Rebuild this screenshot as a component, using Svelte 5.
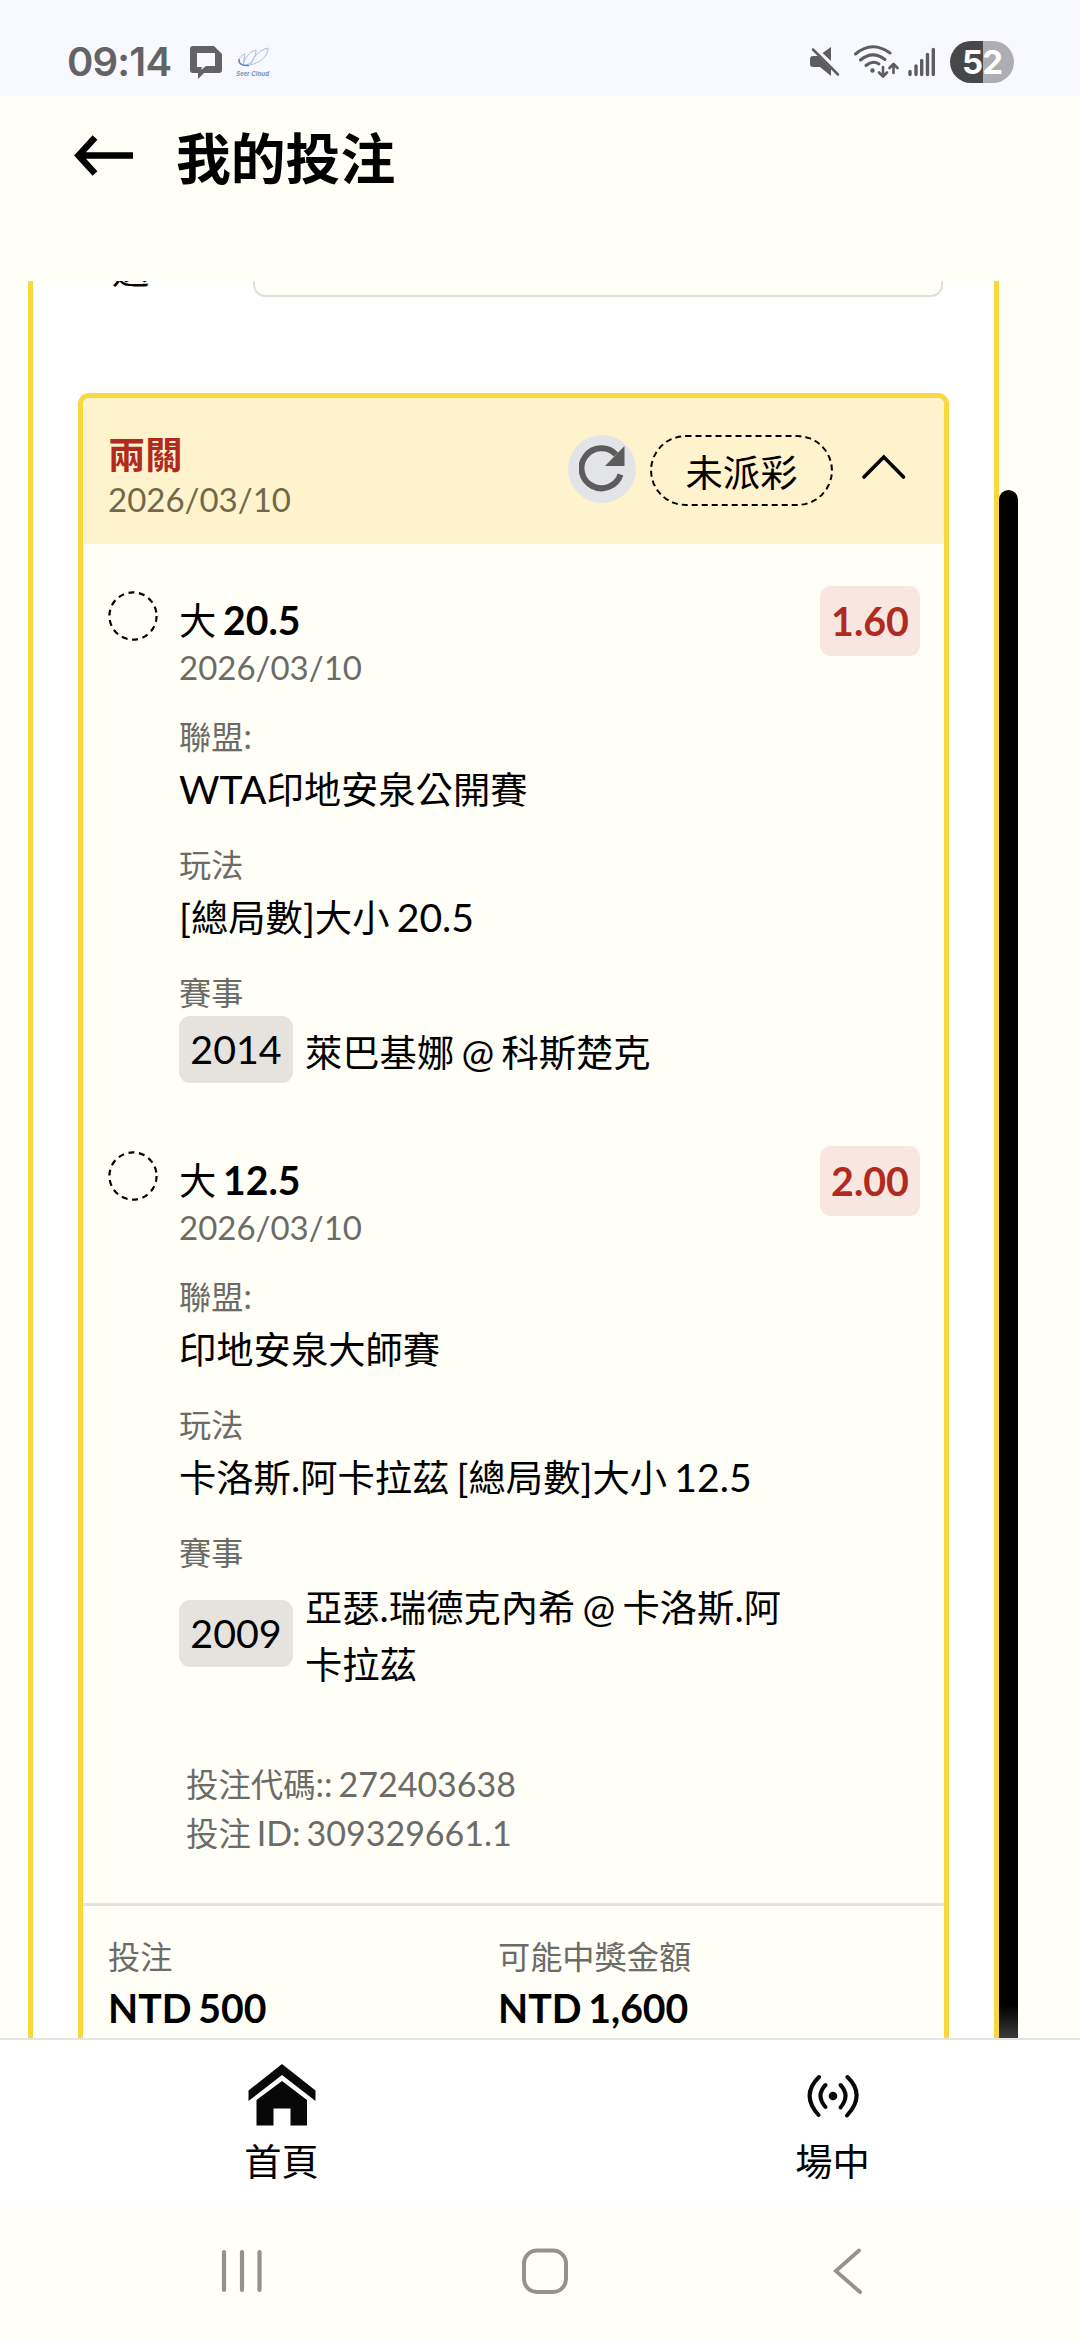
<script lang="ts">
	const legs = [
		{
			side: '大',
			line: '20.5',
			date: '2026/03/10',
			odds: '1.60',
			league: 'WTA印地安泉公開賽',
			market: '[總局數]大小 20.5',
			code: '2014',
			match: '萊巴基娜 @ 科斯楚克'
		},
		{
			side: '大',
			line: '12.5',
			date: '2026/03/10',
			odds: '2.00',
			league: '印地安泉大師賽',
			market: '卡洛斯.阿卡拉茲 [總局數]大小 12.5',
			code: '2009',
			match: '亞瑟.瑞德克內希 @ 卡洛斯.阿卡拉茲'
		}
	];

	const totals = [
		{ label: '投注', amount: 'NTD 500' },
		{ label: '可能中獎金額', amount: 'NTD 1,600' }
	];

	// split mixed text so latin runs can be set slightly larger than the CJK ones
	function runs(text: string) {
		return text.match(/[\x20-\x7e]+|[^\x20-\x7e]+/g) ?? [];
	}
</script>

{#snippet mixed(text: string)}
	{#each runs(text) as run}{#if /^[\x20-\x7e]/.test(run)}<span class="latin">{run}</span>{:else}{run}{/if}{/each}
{/snippet}

<div class="screen">
	<div class="status-bar">
		<span class="clock">09:14</span>
		<svg class="chat-icon" width="32" height="33" viewBox="0 0 32 33">
			<path fill="#636366" fill-rule="evenodd" d="M3 0H24L32 8V24Q32 27 29 27H14L8 33V27H3Q0 27 0 24V3Q0 0 3 0ZM7 7V21H12L11 24L16 20H25V7Z" />
		</svg>
		<svg class="cloud-icon" width="34" height="32" viewBox="0 0 34 32">
			<g fill="none" stroke="#a9bddd" stroke-width="1">
				<path d="M5 18C1 14 4 10 9 8C8 12 8 16 7 19" />
				<path d="M7 19C9 12 13 6 20 4C20 10 17 17 10 19" />
				<path d="M15 18C18 10 23 4 32 2C32 9 26 17 13 19" />
			</g>
			<path fill="none" stroke="#5f86c4" stroke-width="1.400" d="M3 13Q2 20 13 19.500" />
			<text x="0" y="29.500" textLength="33" lengthAdjust="spacingAndGlyphs">Seer Cloud</text>
		</svg>
		<div class="status-right">
			<svg width="30" height="30" viewBox="0 0 30 30">
				<path fill="#5d5d60" d="M21 0V14L12.500 6ZM3 9H8L21 22V29L10 20H3Q0 20 0 17V12Q0 9 3 9Z" />
				<path stroke="#5d5d60" stroke-width="2.500" stroke-linecap="round" d="M3 2.500L28 27.500" />
			</svg>
			<svg class="wifi" width="45" height="34" viewBox="0 0 45 34">
				<g fill="none" stroke="#5d5d60" stroke-width="3" stroke-linecap="round" stroke-linejoin="round">
					<path d="M1.500 9Q18 -5 36 8" />
					<path d="M6.500 15Q18.500 5 31 14.500" />
					<path d="M12 20.500Q18.500 15 25 19" />
					<path d="M29 22V31M25 27.500L29 31.500L33 27.500" stroke-width="2.600" />
					<path d="M39.500 28V19.500M35.500 23L39.500 19L43.500 23" stroke-width="2.600" />
				</g>
				<circle cx="18.500" cy="25.500" r="2.200" fill="#5d5d60" />
			</svg>
			<svg class="signal" width="28" height="30" viewBox="0 0 28 30">
				<path stroke="#5d5d60" stroke-width="3.400" stroke-linecap="round" d="M2 24.500V27.500M8 19V27.500M13.700 13.500V27.500M19.500 7.500V27.500M25.300 2.500V27.500" />
			</svg>
			<div class="battery">52</div>
		</div>
	</div>

	<header>
		<svg width="60" height="42" viewBox="0 0 60 42">
			<path fill="none" stroke="#000" stroke-width="6.500" d="M59 20.500H5M21 2.500L4.500 20.500L21 38.500" />
		</svg>
		<h1>我的投注</h1>
	</header>

	<main>
		<div class="panel">
			<div class="filter">
				<span class="filter-label">選</span>
				<div class="filter-input"></div>
			</div>

			<section class="bet">
				<div class="bet-head">
					<div class="bet-name">
						<b>兩關</b>
						<span class="date">2026/03/10</span>
					</div>
					<div class="refresh">
						<svg width="46" height="48" viewBox="0 0 46 48">
							<path fill="none" stroke="#5c5c5c" stroke-width="6" d="M41.500 29.500A20 20 0 1 1 37 9.500" />
							<path fill="#5c5c5c" d="M45.500 1V21H26Z" />
						</svg>
					</div>
					<span class="pill">未派彩</span>
					<svg class="chevron" width="46" height="28" viewBox="0 0 46 28">
						<path fill="none" stroke="#000" stroke-width="3.600" stroke-linecap="round" d="M3 24L22.800 4L42.500 24" />
					</svg>
				</div>

				<div class="bet-body">
					{#each legs as leg}
						<div class="leg">
							<svg class="pending" width="50" height="50" viewBox="0 0 50 50">
								<circle cx="25" cy="25" r="23.600" fill="none" stroke="#000" stroke-width="2.200" stroke-dasharray="6 4.590" />
							</svg>
							<div class="leg-info">
								<div class="leg-title">{leg.side} <b class="latin">{leg.line}</b></div>
								<div class="date">{leg.date}</div>
								<div class="label first">{@render mixed('聯盟:')}</div>
								<div class="value">{@render mixed(leg.league)}</div>
								<div class="label">玩法</div>
								<div class="value">{@render mixed(leg.market)}</div>
								<div class="label">賽事</div>
								<div class="match">
									<span class="chip">{leg.code}</span>
									<span class="teams">{@render mixed(leg.match)}</span>
								</div>
							</div>
							<span class="odds">{leg.odds}</span>
						</div>
					{/each}

					<div class="codes">
						<div>{@render mixed('投注代碼:: 272403638')}</div>
						<div>{@render mixed('投注 ID: 309329661.1')}</div>
					</div>
				</div>

				<div class="totals">
					{#each totals as total}
						<div>
							<div class="total-label">{total.label}</div>
							<div class="amount">{total.amount}</div>
						</div>
					{/each}
				</div>
			</section>
		</div>
		<div class="scrollbar"></div>
	</main>

	<nav>
		<div class="tab">
			<svg width="68" height="64" viewBox="0 0 68 64">
				<path fill="#080808" d="M34 0L67.500 26.500V37L34 11L0.500 37V26.500Z" />
				<path fill="#080808" d="M34 17L59 36V61.500H42.500V44.500H25.500V61.500H8.500V36Z" />
			</svg>
			<span>首頁</span>
		</div>
		<div class="tab">
			<svg width="68" height="64" viewBox="0 0 68 64">
				<g fill="none" stroke="#080808" stroke-width="4" stroke-linecap="round">
					<path d="M20 13Q1.500 31 19.500 51M48.500 13Q67 31 48 51.500" />
					<path d="M26.500 21Q16.500 31.500 26.500 43M41.500 21Q51.500 31.500 41.500 43.500" />
				</g>
				<circle cx="34" cy="32" r="4.300" fill="#080808" />
			</svg>
			<span>場中</span>
		</div>
	</nav>

	<div class="system-bar">
		<svg width="42" height="46" viewBox="0 0 42 46">
			<path stroke="#93928d" stroke-width="4.200" stroke-linecap="round" d="M3 4V42M21 4V42M38.500 4V42" />
		</svg>
		<svg class="home-key" width="46" height="46" viewBox="0 0 46 46">
			<rect x="2" y="2.500" width="42" height="41.500" rx="13" fill="none" stroke="#93928d" stroke-width="4" />
		</svg>
		<svg width="30" height="46" viewBox="0 0 30 46">
			<path fill="none" stroke="#93928d" stroke-width="3.800" stroke-linecap="round" d="M26 2.500L2.800 23L27 44" />
		</svg>
	</div>
</div>

<style>
	:global(body) {
		background: #fffef7;
	}

	.screen {
		display: flex;
		flex-direction: column;
		width: 1080px;
		height: 2340px;
		overflow: hidden;
		background: #fffef7;
		color: #000;
		font-family: Lato, 'Noto Sans CJK TC', sans-serif;
		font-size: 37.3px;
		word-spacing: -2.8px;
	}

	svg {
		display: block;
		flex-shrink: 0;
	}

	.status-bar {
		display: flex;
		align-items: center;
		height: 96px;
		flex-shrink: 0;
		box-sizing: border-box;
		padding: 28px 66px 0 67px;
		background: #f8f8ff;
	}

	.clock {
		width: 104px;
		font-family: Inter, Roboto, sans-serif;
		font-size: 40px;
		font-weight: 600;
		letter-spacing: -0.8px;
		line-height: 48px;
		white-space: nowrap;
		color: #636366;
	}

	.chat-icon {
		margin-left: 19px;
	}

	.cloud-icon {
		margin-left: 14px;
	}

	.cloud-icon text {
		font-family: 'Liberation Sans', sans-serif;
		font-size: 7px;
		font-weight: 700;
		font-style: italic;
		word-spacing: 0;
		fill: #6d8fc6;
	}

	.status-right {
		display: flex;
		align-items: center;
		margin-left: auto;
	}

	.wifi {
		margin-left: 14px;
	}

	.signal {
		margin-left: 9px;
	}

	.battery {
		width: 64px;
		height: 42px;
		margin-left: 14px;
		border-radius: 21px;
		background: linear-gradient(90deg, #48484b 52%, #adadb2 52%);
		color: #fff;
		font-family: Inter, Roboto, sans-serif;
		font-size: 33px;
		font-weight: 700;
		line-height: 42px;
		letter-spacing: -1px;
		text-align: center;
	}

	header {
		display: flex;
		align-items: center;
		height: 185px;
		flex-shrink: 0;
		box-sizing: border-box;
		padding: 0 74px 65px;
	}

	h1 {
		margin: 4px 0 0 42px;
		font-size: 54.8px;
		font-weight: 700;
		line-height: 70px;
	}

	main {
		display: flex;
		height: 1757px;
		flex-shrink: 0;
		overflow: hidden;
		padding-left: 28px;
	}

	.panel {
		width: 971px;
		box-sizing: border-box;
		border: solid #f8d83c;
		border-width: 0 5px;
		background: #fff;
	}

	.filter {
		display: flex;
		align-items: flex-end;
		height: 16px;
		margin-bottom: 96px;
		padding: 0 51px 0 79px;
	}

	.filter-label {
		width: 141px;
		line-height: 40px;
		margin-bottom: 7px;
	}

	.filter-input {
		flex: 1;
		height: 80px;
		border: 2px solid #e2e0da;
		border-radius: 12px;
		background: #fffef7;
	}

	.bet {
		margin: 0 45px;
		border: 5px solid #f8d83c;
		border-radius: 11px;
		background: #fffef7;
		overflow: hidden;
	}

	.bet-head {
		display: flex;
		height: 146px;
		box-sizing: border-box;
		padding: 37px 37px 0 25px;
		background: #fff3cd;
	}

	.bet-name {
		display: flex;
		flex-direction: column;
		margin-right: auto;
		line-height: 42px;
	}

	.bet-name b {
		margin-top: -1px;
		color: #b02a1f;
	}

	.date {
		font-size: 33px;
		line-height: 44px;
		color: #6b6b67;
	}

	.bet-name .date {
		margin-top: 1px;
		color: #706848;
	}

	.refresh {
		display: grid;
		place-items: center;
		width: 68px;
		height: 68px;
		margin-right: 14px;
		border-radius: 50%;
		background: #e3e4e7;
	}

	.pill {
		width: 183px;
		height: 71px;
		box-sizing: border-box;
		border: 2px dashed #000;
		border-radius: 36px;
		line-height: 72px;
		text-align: center;
	}

	.chevron {
		margin: 18px 0 0 28px;
	}

	.bet-body {
		padding: 42px 24px 45px 25px;
	}

	.leg {
		display: flex;
		margin-bottom: 63px;
	}

	.pending {
		margin: 5px 21px 0 0;
	}

	.leg-info {
		width: 620px;
		margin-right: auto;
		padding-top: 10px;
	}

	.latin {
		font-size: 1.05em;
		line-height: 1;
		white-space: pre-wrap;
	}

	.leg-title {
		line-height: 49px;
	}

	.label,
	.total-label {
		margin-top: 27px;
		font-size: 32.2px;
		line-height: 40px;
		color: #6b6b67;
	}

	.label.first {
		margin-top: 28px;
	}

	.value {
		margin-top: 4px;
		line-height: 57px;
	}

	.match {
		display: flex;
		align-items: center;
		margin-top: 3px;
	}

	.chip {
		flex-shrink: 0;
		width: 114px;
		height: 67px;
		border-radius: 11px;
		background: #e6e3de;
		font-size: 39.4px;
		line-height: 66px;
		text-align: center;
	}

	.teams {
		width: 490px;
		margin: 3px 0 -3px 12px;
		line-height: 57px;
		word-break: break-all;
	}

	.odds {
		width: 100px;
		height: 70px;
		border-radius: 11px;
		background: #f8e7e1;
		color: #b02a1f;
		font-size: 39.4px;
		font-weight: 700;
		line-height: 69px;
		text-align: center;
	}

	.codes {
		margin-top: 70px;
		padding-left: 78px;
		font-size: 32.4px;
		line-height: 49px;
		color: #6b6b67;
	}

	.leg:nth-last-child(2) {
		margin-bottom: 0;
	}

	.totals {
		display: grid;
		grid-template-columns: 390px 1fr;
		border-top: 3px solid #e5e2dc;
		padding: 31px 25px;
	}

	.total-label {
		margin-top: 0;
	}

	.amount {
		margin-top: 6px;
		font-size: 39.2px;
		font-weight: 700;
		line-height: 49px;
	}

	.scrollbar {
		width: 19px;
		height: 1548px;
		margin-top: 209px;
		border-radius: 10px 10px 0 0;
		background: linear-gradient(#000 1515px, #3a3a3a);
	}

	nav {
		display: grid;
		grid-template-columns: 551px 551px;
		height: 167px;
		flex-shrink: 0;
		box-sizing: border-box;
		border-top: 2px solid #e5e4e2;
		padding: 24px 0 0 6px;
		background: #fff;
	}

	.tab {
		display: flex;
		flex-direction: column;
		align-items: center;
	}

	.tab span {
		margin-top: 8px;
		line-height: 52px;
	}

	.system-bar {
		display: flex;
		align-items: center;
		justify-content: space-between;
		flex: 1;
		padding: 0 217px 3px 221px;
	}

	.home-key {
		margin-right: 7px;
	}
</style>
